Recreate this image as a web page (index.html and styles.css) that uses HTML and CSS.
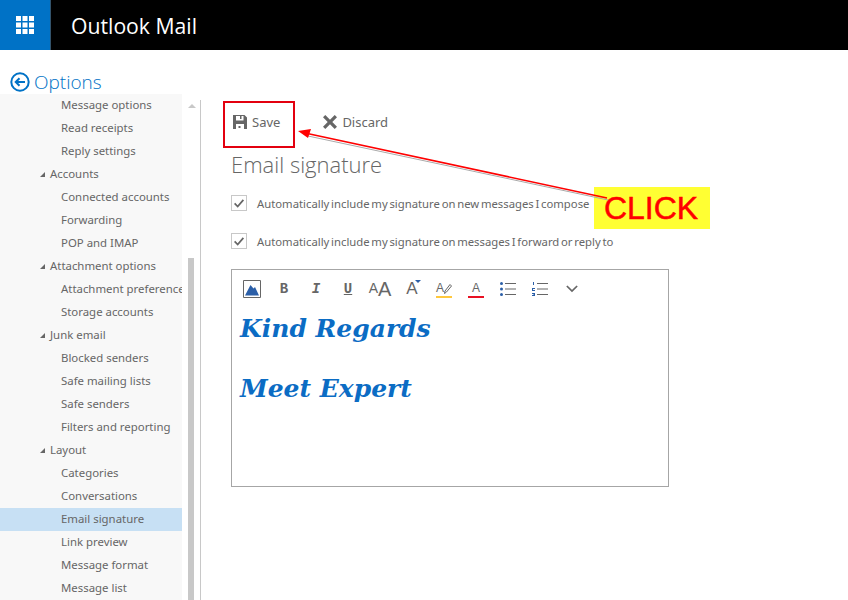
FILE: index.html
```html
<!DOCTYPE html>
<html lang="en">
<head>
  <meta charset="UTF-8">
  <title>Outlook Mail - Options</title>
  <link rel="stylesheet" href="styles.css">
</head>
<body>

  <header class="topbar">
    <div class="app-tile">
      <svg class="waffle" viewBox="0 0 18 18" aria-hidden="true">
        <path d="M0 0h5v5H0zM6.500 0h5v5h-5zM13 0h5v5h-5zM0 6.500h5v5H0zM6.500 6.500h5v5h-5zM13 6.500h5v5h-5zM0 13h5v5H0zM6.500 13h5v5h-5zM13 13h5v5h-5z"/>
      </svg>
    </div>
    <div class="app-name">Outlook Mail</div>
  </header>

  <div class="content">
    <aside class="sidebar">
      <div class="options-title">
        <svg class="back-icon" viewBox="0 0 20 20" aria-hidden="true">
          <circle cx="10" cy="10" r="8.700"/>
          <path d="M15 10H6M9.500 6.200 5.700 10l3.800 3.800"/>
        </svg>
        <span>Options</span>
      </div>
      <div class="sidebar-body">
        <ul class="nav-list">
          <li class="nav-item">Message options</li>
          <li class="nav-item">Read receipts</li>
          <li class="nav-item">Reply settings</li>
          <li class="nav-group">Accounts</li>
          <li class="nav-item">Connected accounts</li>
          <li class="nav-item">Forwarding</li>
          <li class="nav-item">POP and IMAP</li>
          <li class="nav-group">Attachment options</li>
          <li class="nav-item">Attachment preference</li>
          <li class="nav-item">Storage accounts</li>
          <li class="nav-group">Junk email</li>
          <li class="nav-item">Blocked senders</li>
          <li class="nav-item">Safe mailing lists</li>
          <li class="nav-item">Safe senders</li>
          <li class="nav-item">Filters and reporting</li>
          <li class="nav-group">Layout</li>
          <li class="nav-item">Categories</li>
          <li class="nav-item">Conversations</li>
          <li class="nav-item selected">Email signature</li>
          <li class="nav-item">Link preview</li>
          <li class="nav-item">Message format</li>
          <li class="nav-item">Message list</li>
        </ul>
        <div class="scroll-col">
          <div class="scroll-up"></div>
          <div class="scroll-thumb"></div>
        </div>
      </div>
    </aside>

    <main class="main">
      <div class="commands">
        <button class="command">
          <svg viewBox="0 0 14 14" aria-hidden="true">
            <path d="M0 0h11.500L14 2.500V14H0zM3 1v4.500h7.500V1H8.500v3H7V1zM3 9v5h8V9z"/>
            <path d="M5.500 11h2v2h-2z"/>
          </svg>
          Save
        </button>
        <button class="command discard">
          <svg viewBox="0 0 14 14" aria-hidden="true">
            <path d="M2.300 0 7 4.700 11.700 0 14 2.300 9.300 7l4.700 4.700-2.300 2.300L7 9.300 2.300 14 0 11.700 4.700 7 0 2.300z"/>
          </svg>
          Discard
        </button>
      </div>

      <h1 class="page-title">Email signature</h1>

      <label class="check-row">
        <span class="check-box">
          <svg viewBox="0 0 16 16" aria-hidden="true"><path d="M3 8.500 6.500 12 13 4.500"/></svg>
        </span>
        Automatically include my signature on new messages I compose
      </label>
      <label class="check-row">
        <span class="check-box">
          <svg viewBox="0 0 16 16" aria-hidden="true"><path d="M3 8.500 6.500 12 13 4.500"/></svg>
        </span>
        Automatically include my signature on messages I forward or reply to
      </label>

      <div class="editor">
        <div class="editor-tools">
          <span class="tool">
            <svg class="tool-picture" viewBox="0 0 18 18" aria-hidden="true">
              <path class="frame" d="M.5.500h17v17H.5z"/>
              <path class="fill" d="M2 15.500 7.500 5l3 3.500L12 7l4 8.500z"/>
            </svg>
          </span>
          <span class="tool glyph-b">B</span>
          <span class="tool glyph-i">I</span>
          <span class="tool glyph-u">U</span>
          <span class="tool glyph-size"><small>A</small>A</span>
          <span class="tool glyph-grow">A<i class="grow-mark"></i></span>
          <span class="tool">
            <span class="glyph-mark yellow">A
              <svg class="pen" viewBox="0 0 8 10" aria-hidden="true"><path d="M6 .5 7.500 2 2.500 8 .5 9.500 1 7z"/></svg>
            </span>
          </span>
          <span class="tool"><span class="glyph-mark red">A</span></span>
          <span class="tool">
            <svg class="tool-list" viewBox="0 0 16 16" aria-hidden="true">
              <path class="lines" d="M5 2.500h11M5 8h11M5 13.500h11"/>
              <circle cx="1.500" cy="2.500" r="1.500"/>
              <circle cx="1.500" cy="8" r="1.500"/>
              <circle cx="1.500" cy="13.500" r="1.500"/>
            </svg>
          </span>
          <span class="tool">
            <svg class="tool-list" viewBox="0 0 16 16" aria-hidden="true">
              <path class="lines" d="M5 2.500h11M5 8h11M5 13.500h11"/>
              <path d="M1 1h1v3H1zM0 7h3v1H1v1h2v1H0zM0 12h3v3H0v-1h2v-.500H1v-.500h1V13H0z"/>
            </svg>
          </span>
          <span class="tool">
            <svg class="tool-chevron" viewBox="0 0 14 9" aria-hidden="true"><path d="M1 1l6 6 6-6"/></svg>
          </span>
        </div>
        <div class="signature">
          <p>Kind Regards</p>
          <p>&nbsp;</p>
          <p>Meet Expert</p>
        </div>
      </div>
    </main>
  </div>

  <!-- screenshot annotations -->
  <div class="callout-box"></div>
  <div class="callout-label">CLICK</div>
  <svg class="callout-arrow" viewBox="0 0 848 600" aria-hidden="true">
    <path class="arrow-shadow" d="M608 200 308 136"/>
    <path class="arrow-line" d="M607 198 305 133"/>
    <path class="arrow-head" d="M298 131 311 129 308 138z"/>
  </svg>

</body>
</html>
```

FILE: styles.css
```css
* {
  box-sizing: border-box;
}

html,
body {
  height: 100%;
}

body {
  margin: 0;
  overflow: hidden;
  background-color: #ffffff;
  color: #666666;
  font-family: "Noto Sans", "Open Sans", sans-serif;
  font-size: 11.4px;
  display: flex;
  flex-direction: column;
}

/* Top bar */
.topbar {
  height: 50px;
  flex-shrink: 0;
  background-color: #000000;
  display: flex;
  align-items: center;
}

.app-tile {
  width: 51px;
  height: 50px;
  background-color: #0072c6;
  border-right: 1px solid #33536b;
  display: flex;
  align-items: center;
  justify-content: center;
}

.waffle {
  width: 18px;
  height: 18px;
  fill: #ffffff;
}

.app-name {
  margin-left: 20px;
  color: #ffffff;
  font-size: 21.2px;
  font-family: "Open Sans", sans-serif;
}

/* Layout */
.content {
  flex: 1;
  display: flex;
  min-height: 0;
}

/* Sidebar */
.sidebar {
  width: 201px;
  flex-shrink: 0;
  display: flex;
  flex-direction: column;
}

.options-title {
  height: 44px;
  flex-shrink: 0;
  padding: 20px 0 0 10px;
  display: flex;
  align-items: center;
  gap: 4px;
  color: #0072c6;
  font-size: 19px;
  font-weight: 300;
  font-family: "Open Sans", sans-serif;
  line-height: 22px;
}

.back-icon {
  width: 20px;
  height: 20px;
  fill: none;
  stroke: #0072c6;
  stroke-width: 2;
}

.sidebar-body {
  flex: 1;
  display: flex;
  min-height: 0;
}

.nav-list {
  list-style: none;
  margin: 0;
  padding: 0;
  width: 182px;
  flex-shrink: 0;
  background-color: #f8f8f8;
  overflow: hidden;
}

.nav-item,
.nav-group {
  height: 23px;
  line-height: 22px;
  white-space: nowrap;
  overflow: hidden;
}

.nav-item {
  padding-left: 61px;
}

.nav-group {
  padding-left: 50px;
  position: relative;
}

.nav-group::before {
  content: "";
  position: absolute;
  left: 40px;
  top: 9px;
  border-style: solid;
  border-width: 0 0 5px 5px;
  border-color: transparent transparent #666666 transparent;
}

.selected {
  background-color: #c7e0f4;
}

.scroll-col {
  flex: 1;
  margin-top: 6px;
  padding-left: 6px;
  border-right: 1px solid #c8c8c8;
  display: flex;
  flex-direction: column;
}

.scroll-up {
  width: 0;
  margin-top: 4px;
  border-style: solid;
  border-width: 0 4px 4px 4px;
  border-color: transparent transparent #c8c8c8 transparent;
}

.scroll-thumb {
  width: 6px;
  margin-top: 150px;
  flex: 1;
  background-color: #c8c8c8;
}

/* Main area */
.main {
  flex: 1;
  padding-left: 30px;
  min-width: 0;
}

.commands {
  padding: 60px 0 0 2px;
  display: flex;
}

.command {
  border: none;
  background: none;
  padding: 0;
  color: #666666;
  font-family: inherit;
  font-size: 13px;
  display: flex;
  align-items: center;
  gap: 5px;
  height: 24px;
}

.command svg {
  width: 14px;
  height: 14px;
  fill: #666666;
}

.discard {
  margin-left: 43px;
}

.page-title {
  margin: 14px 0 0;
  color: #666666;
  font-family: "Open Sans", sans-serif;
  font-size: 22px;
  font-weight: 300;
  line-height: 32px;
}

.check-row {
  margin-top: 8px;
  height: 30px;
  display: flex;
  align-items: center;
  gap: 10px;
  font-size: 11.3px;
  word-spacing: -1.2px;
}

.check-box {
  width: 16px;
  height: 16px;
  border: 1px solid #c8c8c8;
  display: flex;
}

.check-box svg {
  width: 14px;
  height: 14px;
  fill: none;
  stroke: #666666;
  stroke-width: 2;
}

/* Signature editor */
.editor {
  width: 438px;
  height: 218px;
  margin-top: 13px;
  border: 1px solid #a6a6a6;
  padding: 0 4px;
}

.editor-tools {
  height: 44px;
  padding-top: 7px;
  display: flex;
  align-items: flex-start;
}

.tool {
  width: 32px;
  height: 24px;
  flex-shrink: 0;
  display: flex;
  align-items: center;
  justify-content: center;
  color: #666666;
  font-family: "Liberation Sans", sans-serif;
  position: relative;
}

.tool-picture {
  width: 18px;
  height: 18px;
}

.frame {
  fill: none;
  stroke: #666666;
}

.fill {
  fill: #2b5fa8;
}

.glyph-b,
.glyph-i,
.glyph-u {
  font-family: "Liberation Mono", monospace;
  font-size: 14px;
  font-weight: bold;
}

.glyph-i {
  font-style: italic;
}

.glyph-u {
  text-decoration: underline;
}

.glyph-size {
  font-size: 20px;
  align-items: flex-end;
}

.glyph-size small {
  font-size: 14px;
  margin-bottom: 5px;
}

.glyph-grow {
  font-size: 17px;
}

.grow-mark {
  position: absolute;
  right: 7px;
  top: 3px;
  border-style: solid;
  border-width: 3px 3px 0 3px;
  border-color: #2b5fa8 transparent transparent transparent;
}

.glyph-mark {
  width: 16px;
  font-size: 12px;
  line-height: 15px;
  text-align: center;
  border-bottom: 2px solid;
  position: relative;
}

.pen {
  position: absolute;
  right: 0;
  top: 3px;
  width: 8px;
  height: 10px;
  fill: #ffffff;
  stroke: #666666;
}

.yellow {
  border-bottom-color: #ffc83d;
  text-align: left;
}

.red {
  border-bottom-color: #e81123;
}

.tool-list {
  width: 16px;
  height: 16px;
  fill: #2b5fa8;
}

.lines {
  fill: none;
  stroke: #666666;
  stroke-width: 1;
}

.tool-chevron {
  width: 12px;
  height: 8px;
  fill: none;
  stroke: #666666;
  stroke-width: 2;
}

.signature {
  padding-left: 4px;
  color: #0b6cc4;
  font-family: "DejaVu Serif", serif;
  font-size: 25px;
  font-style: italic;
  font-weight: bold;
  line-height: 30px;
}

.signature p {
  margin: 0;
}

/* Annotations on top of the screenshot */
.callout-box {
  position: absolute;
  left: 223px;
  top: 101px;
  width: 72px;
  height: 47px;
  border: 2px solid #e3000f;
}

.callout-label {
  position: absolute;
  left: 594px;
  top: 187px;
  width: 116px;
  height: 42px;
  padding-right: 2px;
  background-color: #ffff33;
  color: #ff0000;
  font-family: "Liberation Sans", sans-serif;
  font-size: 32px;
  line-height: 42px;
  text-align: center;
  -webkit-text-stroke: 0.5px #ff0000;
}

.callout-arrow {
  position: absolute;
  left: 0;
  top: 0;
  width: 848px;
  height: 600px;
  pointer-events: none;
}

.arrow-shadow {
  fill: none;
  stroke: #aaaaaa;
  stroke-width: 1;
}

.arrow-line {
  fill: none;
  stroke: #ff0000;
  stroke-width: 1.5;
}

.arrow-head {
  fill: #ff0000;
}
```
